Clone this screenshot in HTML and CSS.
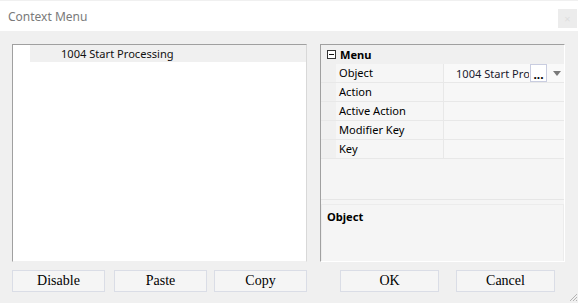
FILE: index.html
```html
<!DOCTYPE html>
<html lang="en">
<head>
  <meta charset="UTF-8">
  <title>Context Menu</title>
  <link rel="stylesheet" href="styles.css">
</head>
<body>
  <div class="titlebar">
    <span class="title">Context Menu</span>
    <span class="close">&times;</span>
  </div>

  <div class="main">
    <div class="tree">
      <div class="tree-row selected">1004 Start Processing</div>
    </div>

    <div class="grid">
      <div class="props">
        <div class="cat-row">
          <span class="toggle"><svg width="9" height="9" viewBox="0 0 9 9"><rect x="0.5" y="0.5" width="8" height="8" fill="#fff" stroke="#333"/><path d="M2 4.5h5" stroke="#111"/></svg></span>
          <span class="cat-name">Menu</span>
        </div>
        <div class="prop-row">
          <span class="gutter"></span>
          <span class="name">Object</span>
          <span class="value active">
            <span class="value-text">1004 Start Processing</span>
            <span class="dots">...</span>
            <span class="arrow"></span>
          </span>
        </div>
        <div class="prop-row">
          <span class="gutter"></span>
          <span class="name">Action</span>
          <span class="value"></span>
        </div>
        <div class="prop-row">
          <span class="gutter"></span>
          <span class="name">Active Action</span>
          <span class="value"></span>
        </div>
        <div class="prop-row">
          <span class="gutter"></span>
          <span class="name">Modifier Key</span>
          <span class="value"></span>
        </div>
        <div class="prop-row">
          <span class="gutter"></span>
          <span class="name">Key</span>
          <span class="value"></span>
        </div>
      </div>
      <div class="help">
        <div class="help-title">Object</div>
      </div>
    </div>
  </div>

  <div class="buttons">
    <div class="group left">
      <button class="btn">Disable</button>
      <button class="btn paste">Paste</button>
      <button class="btn copy">Copy</button>
    </div>
    <div class="group right">
      <button class="btn wide">OK</button>
      <button class="btn wide">Cancel</button>
    </div>
  </div>

  <svg class="grip" width="9" height="9" viewBox="0 0 9 9"><path d="M8 1L1 8M8 4L4 8M8 7L7 8" stroke="#b4b4b4" stroke-width="1"/></svg>
</body>
</html>
```

FILE: styles.css
```css
body { margin: 0; background: #f0f0f0; font-family: "Noto Sans", sans-serif; font-size: 11.1px; color: #000; position: relative; height: 303px; overflow: hidden; }

.titlebar { margin-top: 1px; height: 30px; background: #fff; display: flex; align-items: center; justify-content: space-between; }
.title { padding-left: 8px; color: #7a7a7a; font-size: 12px; }
.close { width: 19px; height: 19px; margin-right: 1px; margin-top: 5px; background: #ececec; color: #dedede; font-size: 11px; display: flex; align-items: center; justify-content: center; }

.main { display: flex; gap: 13px; padding: 13px 0 0 12px; }

.tree { width: 293px; height: 216px; background: #fff; border: 1px solid #f0f0f0; border-top-color: #a0a0a0; border-left-color: #a0a0a0; border-right-color: #d8d8d8; }
.tree-row { height: 17px; line-height: 17px; margin-left: 17px; padding-left: 31px; }
.tree-row.selected { background: #f0f0f0; color: #111; }

.grid { width: 243px; height: 216px; background: #f5f5f5; border: 1px solid #fff; border-top-color: #a0a0a0; border-left-color: #a0a0a0; display: flex; flex-direction: column; }
.props { height: 154px; border-bottom: 1px solid #e6e6e6; }
.cat-row { height: 19px; display: flex; align-items: center; background: #f0f0f0; }
.toggle { width: 18px; display: flex; justify-content: center; padding-left: 1px; }
.cat-name { font-weight: bold; }

.prop-row { height: 18px; display: flex; border-bottom: 1px solid #e8e8e8; }
.gutter { width: 15px; background: #f0f0f0; }
.name { width: 104px; padding-left: 3px; line-height: 18px; background: #f6f6f6; border-right: 1px solid #e8e8e8; }
.value { flex: 1; display: flex; align-items: center; background: #f7f7f7; overflow: hidden; }
.value.active { background: #f9f9f9; }
.value-text { width: 73px; margin-left: 12px; margin-right: 1px; white-space: nowrap; overflow: hidden; color: #1a1a2e; }
.dots { width: 15px; height: 16px; flex-shrink: 0; background: #fff; border: 1px solid #c9cde0; font-weight: bold; font-size: 12px; line-height: 20px; text-align: center; overflow: hidden; }
.arrow { margin-left: 6px; width: 0; height: 0; border-left: 4px solid transparent; border-right: 4px solid transparent; border-top: 5px solid #7a7a7a; }

.help { margin-top: 4px; flex: 1; border: 1px solid #ececec; border-bottom: none; padding: 4px 5px; }
.help-title { font-weight: bold; }

.buttons { display: flex; padding: 8px 0 0 12px; }
.group { display: flex; }
.group.right { margin-left: 33px; gap: 17px; }
.btn { width: 93px; height: 22px; padding: 0; background: #f5f5f5; border: 1px solid #dadde6; font-family: "Liberation Serif", serif; font-size: 14px; color: #000; }
.btn.paste { margin-left: 9px; }
.btn.copy { margin-left: 7px; }
.btn.wide { width: 99px; }

.grip { position: absolute; right: 0; bottom: 1px; }
```
